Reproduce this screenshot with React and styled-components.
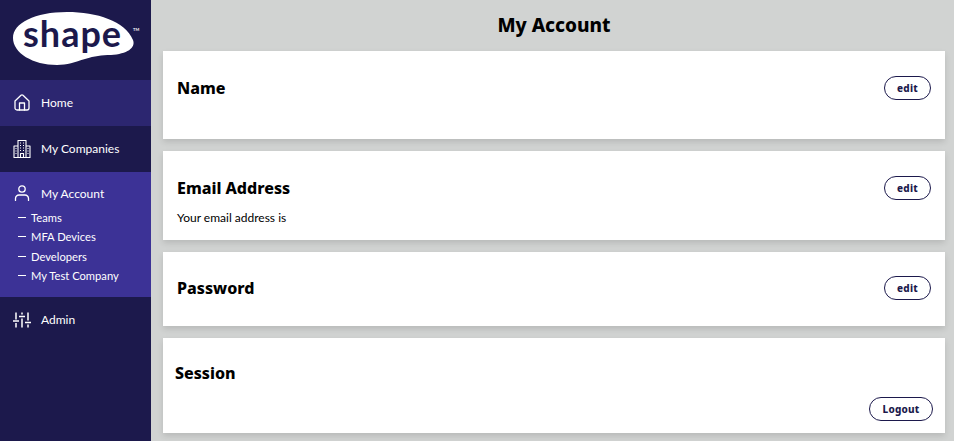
import React from 'react';
import styled, { createGlobalStyle } from 'styled-components';

const Global = createGlobalStyle`
  html, body { margin: 0; padding: 0; height: 100%; background: #d1d3d2; overflow: hidden; }
  #root { height: 100%; }
  * { box-sizing: border-box; }
`;
const Page = styled.div`
  display: flex; width: 954px; height: 441px; overflow: hidden;
  font-family: Lato, sans-serif; background: #d1d3d2;
`;
const Sidebar = styled.aside`
  width: 151px; flex: none; background: #1c194c; color: #fff;
  display: flex; flex-direction: column;
`;
const LogoWrap = styled.div`
  height: 80px; flex: none; padding: 11px 0 0 11px;
`;
const NavRow = styled.div`
  height: ${p => p.$h || 46}px; flex: none; display: flex; align-items: center;
  padding: 0 0 1px 12px; gap: 10px; font-size: 12px;
  background: ${p => p.$bg || 'transparent'};
`;
const IconBox = styled.span`
  width: 19px; height: 20px; display: flex; align-items: center; justify-content: center; flex: none;
`;
const AccountBlock = styled.div`
  height: 125px; flex: none; background: #3c3296; padding-top: 10px;
`;
const AccountHead = styled.div`
  display: flex; align-items: center; gap: 10px; padding-left: 12px; height: 22px; font-size: 12px;
`;
const SubList = styled.ul`
  list-style: none; margin: 4px 0 0; padding: 0 0 0 18px;
`;
const SubItem = styled.li`
  display: flex; align-items: center; height: 19.3px; font-size: 11.2px; gap: 5px;
  &::before { content: ''; width: 8px; height: 1px; background: #fff; }
`;
const Main = styled.main`
  flex: 1; padding: 0 9px 0 12px; display: flex; flex-direction: column; min-width: 0;
`;
const Title = styled.h1`
  margin: 0; height: 51px; flex: none; padding-top: 12px; text-align: center;
  font: 800 19px/27px "Noto Sans", sans-serif; color: #000;
`;
const Card = styled.section`
  height: ${p => p.$h}px; margin-bottom: 12px; flex: none; background: #fff;
  box-shadow: 0 3px 6px rgba(0,0,0,.12);
  padding: ${p => p.$pt}px 14px 0 14px;
`;
const CardHead = styled.div`
  display: flex; justify-content: space-between; align-items: center;
`;
const CardTitle = styled.h2`
  margin: 0; font: 800 16px/24px "Noto Sans", sans-serif; color: #000;
`;
const Body = styled.p`
  margin: 10px 0 0; font-size: 12px; line-height: 16px; color: #000;
`;
const Pill = styled.button`
  width: ${p => p.$w || 47}px; height: 24px; border: 1px solid #1c194c; border-radius: 12px;
  background: #fff; color: #1c194c; padding: 0;
  font: 800 10px/20px "Noto Sans", sans-serif; letter-spacing: .2px;
`;
const SessionTitle = styled(CardTitle)`
  margin-left: -2px;
`;
const SessionFoot = styled.div`
  display: flex; justify-content: flex-end; margin: 12px -2px 0 0;
`;

const stroke = { fill: 'none', stroke: '#fff', strokeWidth: 1.3, strokeLinecap: 'round', strokeLinejoin: 'round' };

const HomeIcon = () => (
  <svg width="16" height="17" viewBox="0 0 16 17" {...stroke}>
    <path d="M1 7 7 1.300a1.500 1.500 0 0 1 2 0L15 7v7a2 2 0 0 1-2 2H3a2 2 0 0 1-2-2Z" />
    <path d="M5.500 16V9h5v7" />
  </svg>
);
const BuildingIcon = () => (
  <svg width="18" height="18" viewBox="0 0 18 18" {...stroke} strokeWidth="1.100" strokeLinecap="butt">
    <path d="M5 17.500V.5h8v17M1 17.500V6h4M13 6h4v11.500M.5 17.500h17" />
    <path d="M7 3h1M10 3h1M7 5.500h1M10 5.500h1M7 8h1M10 8h1M7 10.500h1M10 10.500h1M7.500 17.500V13.500h3v4M2.500 8.500h1M2.500 11h1M2.500 13.500h1M14.500 8.500h1M14.500 11h1M14.500 13.500h1" />
  </svg>
);
const UserIcon = () => (
  <svg width="16" height="16" viewBox="0 0 16 16" {...stroke}>
    <circle cx="8" cy="4" r="3.200" />
    <path d="M1.500 15.500v-2a3.500 3.500 0 0 1 3.500-3.500h6a3.500 3.500 0 0 1 3.500 3.500v2" />
  </svg>
);
const SlidersIcon = () => (
  <svg width="18" height="16" viewBox="0 0 18 16" {...stroke} strokeWidth="1.500" strokeLinecap="butt">
    <path d="M3 .5v7M3 11v4.500M9 .5v2M9 6.500v9M15 .5v8M15 12.500v3" />
    <path d="M0 9h6M6 4.500h6M12 10.500h6" />
  </svg>
);
const Logo = () => (
  <svg width="130" height="56" viewBox="0 0 130 56">
    <path fill="#fff" d="M2 27C2 12 24 1 56 1c30 0 58 9 66 28 3 8-6 14-22 15-10 0-16 1-26 4-10 3-18 6-28 6C22 54 2 42 2 27Z" />
    <text x="12" y="36" fontFamily="Lato, sans-serif" fontWeight="700" fontSize="36" letterSpacing="1" fill="#1c194c">shape</text>
    <text x="122" y="20" fontFamily="Lato, sans-serif" fontWeight="700" fontSize="4" fill="#fff">TM</text>
  </svg>
);

export default function App() {
  return (
    <Page>
      <Global />
      <Sidebar>
        <LogoWrap><Logo /></LogoWrap>
        <NavRow $bg="#2c2670"><IconBox><HomeIcon /></IconBox>Home</NavRow>
        <NavRow><IconBox><BuildingIcon /></IconBox>My Companies</NavRow>
        <AccountBlock>
          <AccountHead><IconBox><UserIcon /></IconBox>My Account</AccountHead>
          <SubList>
            <SubItem>Teams</SubItem>
            <SubItem>MFA Devices</SubItem>
            <SubItem>Developers</SubItem>
            <SubItem>My Test Company</SubItem>
          </SubList>
        </AccountBlock>
        <NavRow><IconBox><SlidersIcon /></IconBox>Admin</NavRow>
      </Sidebar>
      <Main>
        <Title>My Account</Title>
        <Card $h={88} $pt={25}>
          <CardHead><CardTitle>Name</CardTitle><Pill>edit</Pill></CardHead>
        </Card>
        <Card $h={89} $pt={25}>
          <CardHead><CardTitle>Email Address</CardTitle><Pill>edit</Pill></CardHead>
          <Body>Your email address is</Body>
        </Card>
        <Card $h={74} $pt={24}>
          <CardHead><CardTitle>Password</CardTitle><Pill>edit</Pill></CardHead>
        </Card>
        <Card $h={95} $pt={23}>
          <SessionTitle>Session</SessionTitle>
          <SessionFoot><Pill $w={64}>Logout</Pill></SessionFoot>
        </Card>
      </Main>
    </Page>
  );
}
